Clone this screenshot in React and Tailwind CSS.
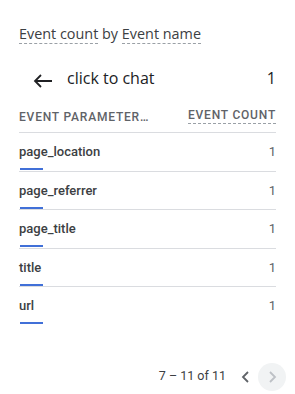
import React from "react";

const rows = ["page_location", "page_referrer", "page_title", "title", "url"];

export default function App() {
  return (
    <div className="w-[295px] h-[394px] bg-white px-[19px] pt-[24px] font-['Roboto',sans-serif] text-[#3c4043]">
      <div className="text-[14.4px] leading-5 text-[#3c4043] font-['Open_Sans',sans-serif]">
        <span className="border-b border-dashed border-[#9aa0a6]">Event count</span>
        <span> by </span>
        <span className="border-b border-dashed border-[#9aa0a6]">Event name</span>
      </div>
      <div className="mt-[18px] h-[32px] flex items-center">
        <svg width="20" height="14" viewBox="0 0 20 14" className="ml-[14px] mt-[6px] text-[#202124]">
          <path d="M19 7H2M8 1L2 7l6 6" fill="none" stroke="currentColor" strokeWidth="1.8" />
        </svg>
        <span className="ml-[14px] text-[16px] text-[#202124] font-['Open_Sans',sans-serif]">click to chat</span>
        <span className="ml-auto text-[16px] text-[#202124] font-['Open_Sans',sans-serif]">1</span>
      </div>
      <div className="mt-[10px] h-[28px] flex items-start pt-[4px] text-[12px] font-medium tracking-[0.8px] text-[#5f6368] uppercase">
        <span>Event parameter…</span>
        <span className="ml-auto border-b border-dashed border-[#9aa0a6] leading-[15px]">Event count</span>
      </div>
      <div>
        {rows.map((r) => (
          <div key={r} className="h-[38.5px] flex flex-col border-t border-[#dadce0]">
            <div className="flex items-center pt-[9px] leading-5 text-[13px] text-[#3c4043]">
              <span className="font-medium">{r}</span>
              <span className="ml-auto text-[#5f6368]">1</span>
            </div>
            <div className="mt-auto mb-[0.5px] ml-px h-[2px] w-[23px] bg-[#4170d8]" />
          </div>
        ))}
      </div>
      <div className="mt-[38px] flex items-center justify-end">
        <span className="text-[12.5px] text-[#3c4043]">7 – 11 of 11</span>
        <svg width="12" height="14" viewBox="0 0 12 14" className="ml-[14px]">
          <path d="M8 2L3 7l5 5" fill="none" stroke="#5f6368" strokeWidth="1.8" />
        </svg>
        <div className="ml-[6px] mr-[-10px] w-[28px] h-[28px] rounded-full bg-[#f1f3f4] flex items-center justify-center">
          <svg width="12" height="14" viewBox="0 0 12 14">
            <path d="M4 2l5 5-5 5" fill="none" stroke="#bdc1c6" strokeWidth="1.8" />
          </svg>
        </div>
      </div>
    </div>
  );
}
